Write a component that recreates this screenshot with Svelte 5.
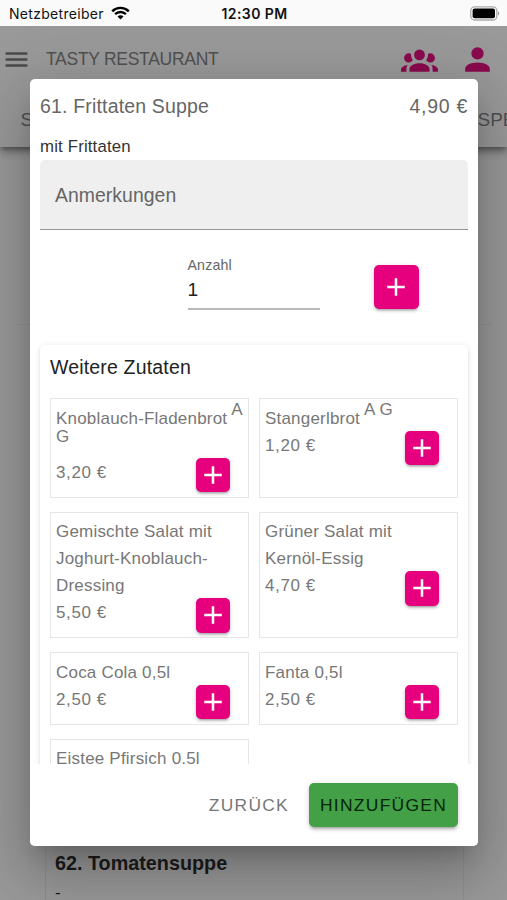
<script>
    const extras = [
        { name: "Knoblauch-Fladenbrot", allergens: "A G", price: "3,20 €" },
        { name: "Stangerlbrot", allergens: "A G", price: "1,20 €" },
        { name: "Gemischte Salat mit Joghurt-Knoblauch-Dressing", price: "5,50 €" },
        // word joiner keeps the last word on one line
        { name: "Grüner Salat mit Kernöl-\u2060Essig", price: "4,70 €" },
        { name: "Coca Cola 0,5l", price: "2,50 €" },
        { name: "Fanta 0,5l", price: "2,50 €" },
        { name: "Eistee Pfirsich 0,5l", price: "2,50 €" },
    ];

    let amount = $state(1);
</script>

{#snippet plus()}
    <svg class="plus" viewBox="0 0 24 24">
        <path d="M19,13H13V19H11V13H5V11H11V5H13V11H19V13Z" />
    </svg>
{/snippet}

<div class="screen">
    <div class="status">
        <div class="carrier">
            <span>Netzbetreiber</span>
            <svg width="19" height="14" viewBox="0 0 19 14">
                <path
                    d="M1.2 5.3A11.8 11.8 0 0 1 17.8 5.3M4.1 8.2A7.7 7.7 0 0 1 14.9 8.2"
                    fill="none"
                    stroke="#000"
                    stroke-width="2.4"
                />
                <path d="M9.5 13.6L6.5 10.5A4.2 4.2 0 0 1 12.5 10.5Z" />
            </svg>
        </div>
        <b>12:30 PM</b>
        <svg class="battery" width="30" height="15" viewBox="0 0 30 15">
            <rect x=".8" y=".8" width="26" height="13.2" rx="3.8" fill="#fff" stroke="#aaa" stroke-width="1.3" />
            <rect x="2.6" y="2.6" width="22.4" height="9.6" rx="2" />
            <path d="M28 5.2Q30.4 7.4 28 9.6Z" fill="#999" />
        </svg>
    </div>

    <header>
        <div class="bar">
            <svg class="menu" viewBox="0 0 24 24">
                <path d="M3,6H21V8H3V6M3,11H21V13H3V11M3,16H21V18H3V16Z" />
            </svg>
            <span class="brand">TASTY RESTAURANT</span>
            <svg class="people" viewBox="0 0 24 24">
                <path
                    d="M12,5.5A3.5,3.5 0 0,1 15.5,9A3.5,3.5 0 0,1 12,12.5A3.5,3.5 0 0,1 8.5,9A3.5,3.5 0 0,1 12,5.5M5,8C5.56,8 6.08,8.15 6.53,8.42C6.38,9.85 6.8,11.27 7.66,12.38C7.16,13.34 6.16,14 5,14A3,3 0 0,1 2,11A3,3 0 0,1 5,8M19,8A3,3 0 0,1 22,11A3,3 0 0,1 19,14C17.84,14 16.84,13.34 16.34,12.38C17.2,11.27 17.62,9.85 17.47,8.42C17.92,8.15 18.44,8 19,8M5.5,18.25C5.5,16.18 8.41,14.5 12,14.5C15.59,14.5 18.5,16.18 18.5,18.25V20H5.5V18.25M0,20V18.5C0,17.11 1.89,15.94 4.45,15.6C3.86,16.28 3.5,17.22 3.5,18.25V20H0M24,20H20.5V18.25C20.5,17.22 20.14,16.28 19.55,15.6C22.11,15.94 24,17.11 24,18.5V20Z"
                />
            </svg>
            <svg class="people" viewBox="0 0 24 24">
                <path
                    d="M12,4A4,4 0 0,1 16,8A4,4 0 0,1 12,12A4,4 0 0,1 8,8A4,4 0 0,1 12,4M12,14C16.42,14 20,15.79 20,18V20H4V18C4,15.79 7.58,14 12,14Z"
                />
            </svg>
        </div>
        <div class="tabs">
            <span>S</span>
            <span>SPE</span>
        </div>
    </header>

    <main>
        <div class="group">
            <div class="dish">
                <h2>62. Tomatensuppe</h2>
                <p>-</p>
            </div>
        </div>
    </main>

    <div class="dialog">
        <div class="title">
            <span>61. Frittaten Suppe</span>
            <span class="price">4,90 €</span>
        </div>
        <div class="subtitle">mit Frittaten</div>
        <div class="notes">Anmerkungen</div>

        <div class="amount">
            <div class="field">
                <span class="label">Anzahl</span>
                <span class="value">{amount}</span>
            </div>
            <button class="add big" aria-label="Anzahl erhöhen" onclick={() => amount++}>
                {@render plus()}
            </button>
        </div>

        <div class="scroll">
            <section>
                <h3>Weitere Zutaten</h3>
                <div class="grid">
                    {#each extras as extra}
                        <div class="extra">
                            <div>
                                {extra.name}
                                {#if extra.allergens}<sup>{extra.allergens}</sup>{/if}
                            </div>
                            <div class="buy">
                                <span class="price">{extra.price}</span>
                                <button class="add" aria-label="Hinzufügen">
                                    {@render plus()}
                                </button>
                            </div>
                        </div>
                    {/each}
                </div>
            </section>
        </div>

        <div class="actions">
            <button class="back">ZURÜCK</button>
            <button class="confirm">HINZUFÜGEN</button>
        </div>
    </div>
</div>

<style>
    :global(body) {
        margin: 0;
    }

    .screen {
        position: relative;
        display: flex;
        flex-direction: column;
        width: 507px;
        height: 900px;
        overflow: hidden;
        background: #999;
        font-family: "Liberation Sans", Arial, sans-serif;
        box-sizing: border-box;
    }

    .screen * {
        box-sizing: border-box;
    }

    svg {
        display: block;
        flex: none;
    }

    button {
        border: 0;
        padding: 0;
        font-family: inherit;
    }

    .status {
        display: grid;
        grid-template-columns: 1fr auto 1fr;
        align-items: center;
        height: 26px;
        padding: 0 7px 0 9px;
        background: #fafafa;
        color: #111;
        font: 14px Inter, sans-serif;
        flex: none;
        z-index: 2;

        & b {
            font-size: 14px;
            font-weight: 600;
            letter-spacing: 0.4px;
        }
    }

    .carrier {
        display: flex;
        align-items: center;
        gap: 7px;
        letter-spacing: 0.3px;
    }

    .battery {
        justify-self: end;
    }

    header {
        height: 121px;
        flex: none;
        background: #999;
        box-shadow:
            0 3px 5px -1px rgba(0, 0, 0, 0.3),
            0 5px 8px rgba(0, 0, 0, 0.2),
            0 1px 14px rgba(0, 0, 0, 0.15);
    }

    .bar {
        display: flex;
        align-items: center;
        height: 67px;
        padding: 0 11px 0 2px;
    }

    .menu {
        width: 29px;
        height: 29px;
        fill: #4a4a4a;
    }

    .brand {
        flex: 1;
        margin-left: 15px;
        color: #505050;
        font-size: 17.5px;
        letter-spacing: -0.28px;
        white-space: nowrap;
    }

    .people {
        width: 37px;
        height: 37px;
        margin-left: 21.5px;
        fill: #8a0a4e;
    }

    .tabs {
        display: flex;
        justify-content: space-between;
        align-items: center;
        height: 54px;
        padding-left: 20.5px;
        color: #505050;
        font-size: 19px;

        & span:last-child {
            width: 29.5px;
            overflow: hidden;
        }
    }

    main {
        flex: 1;
        display: flex;
        padding: 177px 15px 0;
    }

    .group {
        flex: 1;
        border-top: 1px solid #919191;
        padding: 520px 28px 0 30px;
    }

    .dish {
        height: 56px;
        border: solid #8f8f8f;
        border-width: 0 1px;
        padding: 4px 9px 0;
        color: #1c1c1c;

        & h2 {
            margin: 0;
            font-size: 19.8px;
            line-height: 28px;
        }

        & p {
            margin: 0;
            font-size: 17px;
            line-height: 31px;
        }
    }

    /* modal over the dimmed menu page */
    .dialog {
        position: absolute;
        left: 30px;
        top: 79px;
        width: 448px;
        height: 767px;
        display: flex;
        flex-direction: column;
        background: #fff;
        border-radius: 5px;
        box-shadow:
            0 15px 20px -9px rgba(0, 0, 0, 0.2),
            0 32px 51px 4px rgba(0, 0, 0, 0.14),
            0 12px 62px 11px rgba(0, 0, 0, 0.12);
        z-index: 1;
    }

    .title {
        display: flex;
        justify-content: space-between;
        height: 54px;
        padding: 14px 10px 0;
        color: #666;
        font-size: 19.5px;
        line-height: 27px;
        letter-spacing: 0.17px;

        & .price {
            letter-spacing: 0.7px;
        }
    }

    .subtitle {
        height: 27px;
        padding: 0 10px;
        color: #333;
        font-size: 16.8px;
        line-height: 28px;
        letter-spacing: 0.17px;
    }

    .notes {
        height: 69.5px;
        margin: 0 10px;
        padding: 0 15px;
        background: #efefef;
        border-bottom: 1.4px solid #949494;
        border-radius: 5px 5px 0 0;
        color: #666;
        font-size: 19.4px;
        line-height: 70px;
        letter-spacing: 0.05px;
    }

    .amount {
        display: flex;
        justify-content: flex-end;
        height: 115.5px;
        padding: 35px 59.5px 0 0;
    }

    .field {
        display: flex;
        flex-direction: column;
        width: 132.5px;
        height: 45px;
        margin-right: 54px;
        border-bottom: 2px solid #b9b9b9;
    }

    .label {
        height: 14px;
        margin-top: -7px;
        color: #666;
        font-size: 14.2px;
        line-height: 14px;
        letter-spacing: 0.15px;
    }

    .value {
        margin-top: 6px;
        color: #222;
        font-size: 19.2px;
        line-height: 24px;
    }

    .add {
        display: flex;
        align-items: center;
        justify-content: center;
        flex: none;
        width: 34.5px;
        height: 34.5px;
        border-radius: 5px;
        background: #e6007e;
        box-shadow:
            0 3px 2px -2px rgba(0, 0, 0, 0.2),
            0 2px 3px rgba(0, 0, 0, 0.14),
            0 1px 5px rgba(0, 0, 0, 0.12);
    }

    .big {
        width: 44.5px;
        height: 44.5px;
    }

    .plus {
        width: 30px;
        height: 30px;
        fill: #fff;
    }

    .scroll {
        height: 419px;
        padding: 0 10px;
        flex: none;
        /* clips the list at the bottom, keeps the panel's shadow at its top */
        overflow: clip;
        overflow-clip-margin: 5px;
    }

    section {
        height: 500px;
        padding: 9px 10px;
        border-radius: 5px;
        box-shadow:
            0 2px 3px rgba(0, 0, 0, 0.08),
            0 1px 7px rgba(0, 0, 0, 0.1);
    }

    h3 {
        margin: 0 0 17px;
        color: #222;
        font-size: 19.5px;
        font-weight: 400;
        line-height: 27px;
        letter-spacing: 0.17px;
    }

    .grid {
        display: grid;
        grid-template-columns: 199px 199px;
        gap: 14px 10px;
    }

    .extra {
        display: flex;
        flex-direction: column;
        padding: 5.5px 0 11px 5px;
        border: 1px solid #e6e6e6;
        color: #777;
        font-size: 17px;
        line-height: 27px;
        letter-spacing: 0.2px;

        & sup {
            position: relative;
            top: -9px;
            font-size: inherit;
            vertical-align: baseline;
        }
    }

    .buy {
        display: flex;
        justify-content: space-between;
        height: 27px;
        padding-right: 18px;

        & .price {
            letter-spacing: 0.6px;
        }

        & .add {
            margin-top: -1px;
        }
    }

    .actions {
        display: flex;
        align-items: center;
        justify-content: flex-end;
        flex: 1;
        padding: 0 20px 0 0;
        background: #fff;
        border-radius: 0 0 5px 5px;
        z-index: 1;

        & button {
            height: 44px;
            border-radius: 5px;
            font-size: 17.4px;
            letter-spacing: 1.3px;
        }
    }

    .back {
        margin-right: 20px;
        background: none;
        color: #777;
    }

    .confirm {
        width: 149px;
        background: #43a047;
        color: #06240a;
        box-shadow:
            0 4px 2px -3px rgba(0, 0, 0, 0.2),
            0 3px 3px rgba(0, 0, 0, 0.14),
            0 1px 7px rgba(0, 0, 0, 0.12);
    }
</style>
